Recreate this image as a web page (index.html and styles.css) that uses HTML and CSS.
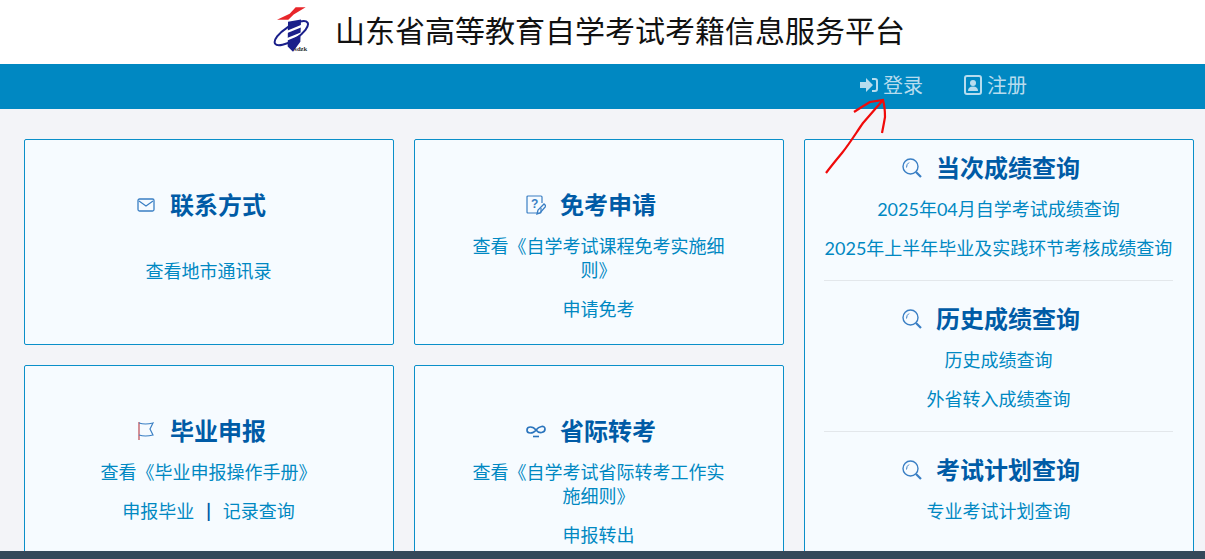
FILE: index.html
```html
<!DOCTYPE html>
<html lang="zh-CN">
<head>
    <meta charset="UTF-8">
    <title>山东省高等教育自学考试考籍信息服务平台</title>
    <link rel="stylesheet" href="styles.css">
</head>
<body>
    <div class="header">
        <svg class="logo" viewBox="40 15 114 140" width="38" height="47">
            <path d="M108 18 H138 L102 40 L86 56 H52 L90 38 Z" fill="#e8262a"/>
            <path d="M85 62 L124 55 L122 122 L100 152 L84 136 Z" fill="#1a1f8a"/>
            <path d="M78 94 L132 72 M78 116 L132 94" stroke="#ffffff" stroke-width="7"/>
            <ellipse cx="95" cy="96" rx="58" ry="21" transform="rotate(-33 95 96)" fill="none" stroke="#1a1f8a" stroke-width="6"/>
            <text x="104" y="150" class="logo-text">sdzk</text>
        </svg>
        <h1>山东省高等教育自学考试考籍信息服务平台</h1>
    </div>

    <div class="nav">
        <a class="nav-item" href="#">
            <svg viewBox="0 0 18 16" width="18" height="16"><path d="M0 5 H6 V1 L13 8 L6 15 V11 H0 Z M12 1 H15 Q18 1 18 4 V12 Q18 15 15 15 H12 V13 H15 Q16 13 16 12 V4 Q16 3 15 3 H12 Z" fill="#b7dcee"/></svg>
            登录
        </a>
        <a class="nav-item" href="#">
            <svg viewBox="0 0 18 20" width="18" height="20"><rect x="1" y="1" width="16" height="18" rx="2" fill="none" stroke="#b7dcee" stroke-width="2"/><circle cx="9" cy="8" r="3" fill="#b7dcee"/><path d="M4 16 Q4 11.500 9 11.500 Q14 11.500 14 16 Z" fill="#b7dcee"/></svg>
            注册
        </a>
    </div>

    <div class="main">
        <div class="card">
            <h2 class="card-title">
                <svg class="icon" viewBox="0 0 20 20"><rect x="2" y="4" width="16" height="12" rx="1.500" fill="none" stroke="#3a7fc4" stroke-width="1.300"/><path d="M3 6 L10 11 L17 6" fill="none" stroke="#3a7fc4" stroke-width="1.200"/></svg>
                联系方式
            </h2>
            <p class="card-link card-link-far"><a href="#">查看地市通讯录</a></p>
        </div>

        <div class="card">
            <h2 class="card-title">
                <svg class="icon" viewBox="0 0 20 20"><path d="M15 13 V17 Q15 18 14 18 H2 Q1 18 1 17 V2 Q1 1 2 1 H15 Q16 1 16 2 V8" fill="none" stroke="#3a7fc4" stroke-width="1.200"/><text x="5" y="13" class="icon-text">?</text><path d="M11 19 L12 15 L18 9 L20 11 L14 18 Z" fill="none" stroke="#3a7fc4" stroke-width="1.300"/></svg>
                免考申请
            </h2>
            <p class="card-link"><a href="#">查看《自学考试课程免考实施细则》</a></p>
            <p class="card-link"><a href="#">申请免考</a></p>
        </div>

        <div class="card card-side">
            <div class="side-section">
                <h2 class="card-title">
                    <svg class="icon" viewBox="0 0 20 20"><circle cx="8.500" cy="8.500" r="7.500" fill="none" stroke="#3a7fc4" stroke-width="1.400"/><path d="M14 14 L19 19" stroke="#3a7fc4" stroke-width="2.200"/><path d="M4.500 9.500 Q4.500 6 7 4.500" fill="none" stroke="#3a7fc4"/></svg>
                    当次成绩查询
                </h2>
                <p class="card-link"><a href="#">2025年04月自学考试成绩查询</a></p>
                <p class="card-link"><a href="#">2025年上半年毕业及实践环节考核成绩查询</a></p>
            </div>
            <div class="side-section">
                <h2 class="card-title">
                    <svg class="icon" viewBox="0 0 20 20"><circle cx="8.500" cy="8.500" r="7.500" fill="none" stroke="#3a7fc4" stroke-width="1.400"/><path d="M14 14 L19 19" stroke="#3a7fc4" stroke-width="2.200"/><path d="M4.500 9.500 Q4.500 6 7 4.500" fill="none" stroke="#3a7fc4"/></svg>
                    历史成绩查询
                </h2>
                <p class="card-link"><a href="#">历史成绩查询</a></p>
                <p class="card-link"><a href="#">外省转入成绩查询</a></p>
            </div>
            <div class="side-section">
                <h2 class="card-title">
                    <svg class="icon" viewBox="0 0 20 20"><circle cx="8.500" cy="8.500" r="7.500" fill="none" stroke="#3a7fc4" stroke-width="1.400"/><path d="M14 14 L19 19" stroke="#3a7fc4" stroke-width="2.200"/><path d="M4.500 9.500 Q4.500 6 7 4.500" fill="none" stroke="#3a7fc4"/></svg>
                    考试计划查询
                </h2>
                <p class="card-link"><a href="#">专业考试计划查询</a></p>
            </div>
        </div>

        <div class="card">
            <h2 class="card-title">
                <svg class="icon" viewBox="0 0 20 20"><path d="M3 1 V19" stroke="#c0555f" stroke-width="1.300"/><path d="M3 2 Q9 4 17 2 L14 8 L17 14 Q9 16 3 14" fill="none" stroke="#3a7fc4" stroke-width="1.200"/></svg>
                毕业申报
            </h2>
            <p class="card-link"><a href="#">查看《毕业申报操作手册》</a></p>
            <p class="card-link"><a href="#">申报毕业</a><span class="sep">|</span><a href="#">记录查询</a></p>
        </div>

        <div class="card">
            <h2 class="card-title">
                <svg class="icon" viewBox="0 0 20 20"><path d="M1 9 C1 5 7 5 10 9 C13 13 19 12 19 8 C19 4 13 5 10 9 C7 13 1 13 1 9 Z" fill="none" stroke="#2a74bd" stroke-width="1.700"/><path d="M7 15.500 H13" stroke="#2a74bd" stroke-width="1.600"/></svg>
                省际转考
            </h2>
            <p class="card-link"><a href="#">查看《自学考试省际转考工作实施细则》</a></p>
            <p class="card-link"><a href="#">申报转出</a></p>
        </div>
    </div>

    <div class="footer"></div>

    <!-- red arrow scribbled over the screenshot -->
    <svg class="scribble" viewBox="0 0 70 80" width="70" height="80">
        <path d="M2 76 C8 68 13 62 18 56 C26 46 32 36 39 26 C46 18 53 10 59 3 M30 15 C36 11 41 8 46 5 L59 3 C61 10 61 15 61 20 C60 26 59 31 58 36" fill="none" stroke="#f00a0a" stroke-width="2.200"/>
    </svg>
</body>
</html>
```

FILE: styles.css
```css
html, body {
    height: 100%;
}

body {
    margin: 0;
    height: 559px;
    overflow: hidden;
    position: relative;
    font-family: Lato, "Noto Sans CJK SC", sans-serif;
    background-color: #f3f4f8;
}

a {
    color: #0088c2;
    text-decoration: none;
}

.header {
    height: 64px;
    background-color: #ffffff;
    display: flex;
    align-items: center;
    padding-left: 273px;
}

.logo {
    margin-top: -6px;
}

.logo-text {
    font-family: "Liberation Serif", serif;
    font-size: 20px;
    font-weight: bold;
    fill: #333333;
}

.header h1 {
    margin: -4px 0 0 24px;
    font-size: 30px;
    line-height: 64px;
    font-weight: normal;
    color: #111111;
}

.nav {
    height: 45px;
    background-color: #0088c2;
    display: flex;
    align-items: center;
    padding-left: 860px;
    gap: 41px;
}

.nav-item {
    display: flex;
    align-items: center;
    gap: 5px;
    color: #b7dcee;
    font-size: 20px;
    line-height: 42px;
    padding-bottom: 4px;
}

.main {
    display: grid;
    grid-template-columns: 370px 370px 390px;
    grid-template-rows: 206px 206px;
    gap: 20px;
    padding: 30px 0 0 24px;
    height: 412px;
    overflow: hidden;
}

.card {
    box-sizing: border-box;
    background-color: #f6fbff;
    border: 1px solid #0a8fc9;
    border-radius: 2px;
    padding: 51px 51px 0 50px;
    text-align: center;
}

.card-side {
    grid-column: 3;
    grid-row: 1 / 3;
    height: 432px;
    padding: 14px 20px 0 19px;
}

.side-section {
    padding-bottom: 5px;
    border-bottom: 1px solid #e3e7eb;
    margin-bottom: 24px;
}

.side-section:last-child {
    border-bottom: none;
    margin-bottom: 0;
}

.card-title {
    margin: 0 0 15px;
    display: flex;
    align-items: center;
    justify-content: center;
    gap: 14px;
    padding-right: 15px;
    font-size: 24px;
    line-height: 28px;
    font-weight: bold;
    color: #005ba6;
}

.icon {
    width: 20px;
    height: 20px;
}

.icon-text {
    font-family: "Liberation Sans", sans-serif;
    font-size: 12px;
    fill: #3a7fc4;
}

.card-link {
    margin: 0 0 15px;
    font-size: 18px;
    line-height: 24px;
}

.card-link-far {
    margin-top: 40px;
}

.sep {
    margin: 0 12px;
    color: #005ba6;
    font-weight: bold;
}

.footer {
    position: absolute;
    left: 0;
    right: 0;
    bottom: 0;
    height: 8px;
    background-color: #34495a;
}

.scribble {
    position: absolute;
    left: 824px;
    top: 97px;
}
```
